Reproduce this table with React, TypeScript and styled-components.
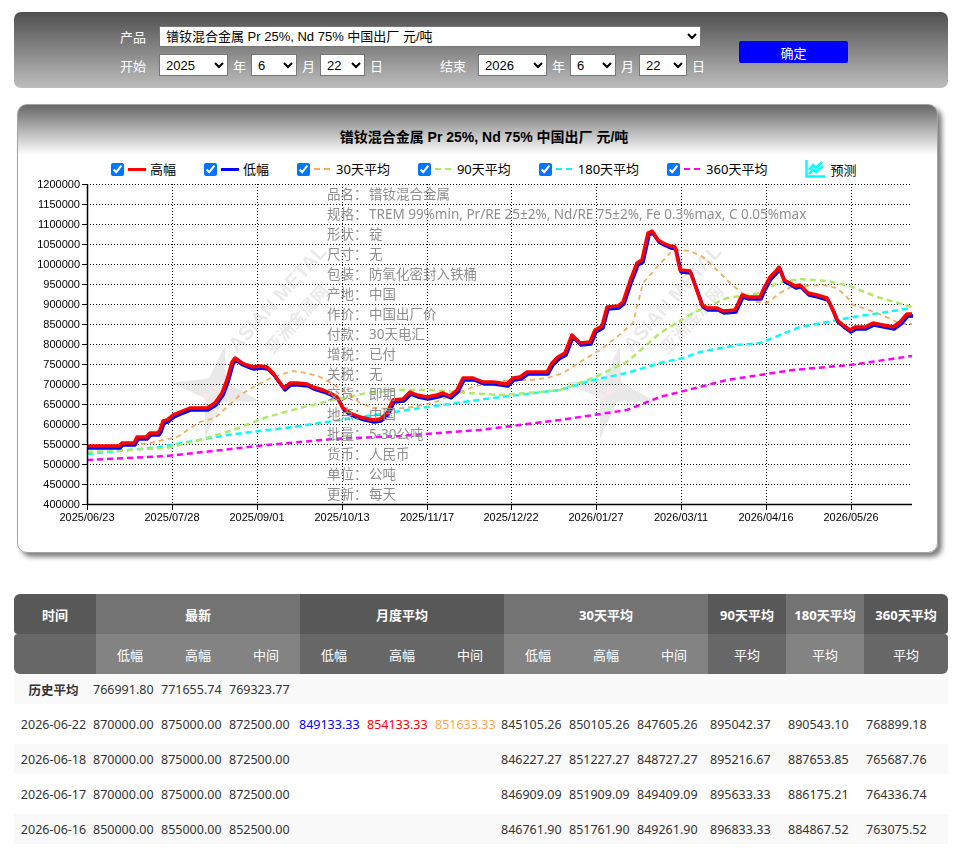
import styled, { createGlobalStyle } from "styled-components";

const GlobalStyle = createGlobalStyle`
  body {
    margin: 0;
    background: #fff;
    font-family: "Noto Sans", "Noto Sans CJK SC", sans-serif;
  }
`;

const Page = styled.div`
  width: 970px;
  padding: 12px 0 20px;
`;

/* ---------- filter bar ---------- */

const FilterBar = styled.div`
  box-sizing: border-box;
  width: 934px;
  height: 76px;
  margin-left: 14px;
  padding: 14px 0 0 106px;
  border-radius: 7px;
  background: linear-gradient(#4f4f4f, #bdbdbd);
  display: flex;
  align-items: flex-start;
`;

const Fields = styled.div`
  display: flex;
  flex-direction: column;
  gap: 7px;
`;

const FieldRow = styled.div`
  display: flex;
  align-items: center;
`;

const Label = styled.span<{ $width?: number; $gap?: number }>`
  width: ${(p) => p.$width ?? 39}px;
  margin-left: ${(p) => p.$gap ?? 0}px;
  color: #fff;
  font-size: 13px;
  font-family: "Liberation Sans", "Noto Sans CJK SC", sans-serif;
`;

const Unit = styled.span`
  margin: 0 5px;
  color: #fff;
  font-size: 13px;
  font-family: "Liberation Sans", "Noto Sans CJK SC", sans-serif;
`;

const Select = styled.select<{ $width: number; $height?: number }>`
  box-sizing: border-box;
  width: ${(p) => p.$width}px;
  height: ${(p) => p.$height ?? 22}px;
  padding: 0 0 0 2px;
  border: 1px solid #767676;
  background: #fff;
  color: #000;
  font-size: 13px;
  font-family: "Liberation Sans", "Noto Sans CJK SC", sans-serif;
`;

const ConfirmButton = styled.button`
  width: 109px;
  height: 22px;
  margin: 15px 0 0 29px;
  border: none;
  border-radius: 2px;
  background: #0000ff;
  color: #fff;
  font-size: 13px;
  font-family: "Noto Sans CJK SC", sans-serif;
  padding: 0;
`;

/* ---------- chart panel ---------- */

const Panel = styled.section`
  position: relative;
  box-sizing: border-box;
  width: 921px;
  height: 449px;
  margin: 16px 0 0 17px;
  border: 1px solid #a3a3a3;
  border-radius: 10px;
  background: linear-gradient(#686868 0, #ffffff 50px, #ffffff 100%);
  box-shadow: 4px 4px 5px rgba(0, 0, 0, 0.5);
`;

const ChartTitle = styled.div`
  padding: 23px 0 0 13px;
  height: 18px;
  line-height: 18px;
  text-align: center;
  font-size: 14px;
  font-weight: bold;
  color: #000;
  font-family: "Liberation Sans", "Noto Sans CJK SC", sans-serif;
`;

const Legend = styled.div`
  display: flex;
  align-items: center;
  gap: 28px;
  height: 18px;
  margin-top: 14px;
  padding-left: 93px;
  font-size: 13px;
  color: #000;
`;

const LegendItem = styled.label`
  display: flex;
  align-items: center;
  gap: 4px;
  line-height: 18px;
`;

const Check = styled.input`
  width: 13px;
  height: 13px;
  margin: 0;
`;

const Swatch = styled.span<{ $color: string; $dashed?: boolean }>`
  display: inline-block;
  width: ${(p) => (p.$dashed ? 16 : 18)}px;
  height: ${(p) => (p.$dashed ? 2.5 : 3)}px;
  margin-right: ${(p) => (p.$dashed ? 2 : 0)}px;
  background: ${(p) =>
    p.$dashed
      ? `repeating-linear-gradient(to right, ${p.$color} 0 6px, transparent 6px 10px)`
      : p.$color};
`;

const Forecast = styled.span`
  display: flex;
  align-items: center;
  gap: 5px;
  margin-left: 10px;
`;

const ChartArea = styled.div`
  position: relative;
`;

const Plot = styled.svg`
  display: block;
`;

const InfoBox = styled.div`
  position: absolute;
  left: 309px;
  top: 6px;
  display: grid;
  grid-template-columns: 42px auto;
  font-size: 13.5px;
  line-height: 20px;
  color: #8e8e8e;
  pointer-events: none;
`;

/* ---------- table ---------- */

const Table = styled.div`
  width: 934px;
  margin: 41px 0 0 14px;
`;

const HeadGrid = styled.div`
  display: grid;
  grid-template-columns: 82px repeat(9, 68px) 78px 78px 84px;
  grid-template-rows: 40px 40px;
`;

const HeadCell = styled.div<{ $span?: number; $light?: boolean; $sub?: boolean; $corner?: string }>`
  grid-column: span ${(p) => p.$span ?? 1};
  display: flex;
  align-items: center;
  justify-content: center;
  background: ${(p) =>
    p.$sub ? (p.$light ? "#838383" : "#676767") : p.$light ? "#737373" : "#585858"};
  border-radius: ${(p) => p.$corner ?? "0"};
  color: #fff;
  font-size: 13px;
  font-weight: ${(p) => (p.$sub ? "normal" : "bold")};
  font-family: "Noto Sans", "Noto Sans CJK SC", sans-serif;
`;

const BodyRow = styled.div<{ $striped: boolean }>`
  display: grid;
  grid-template-columns: 79px 68px 68px 70px 68px 68px 66px 68px 68px 73px 78px 78px 82px;
  height: ${(p) => (p.$striped ? 30 : 40)}px;
  align-items: center;
  background: ${(p) => (p.$striped ? "#f9f9f9" : "#fff")};
  color: #333;
  font-size: 12.5px;
`;

const DateCell = styled.div<{ $bold?: boolean }>`
  text-align: center;
  font-weight: ${(p) => (p.$bold ? "bold" : "normal")};
`;

const NumCell = styled.div<{ $color?: string }>`
  color: ${(p) => p.$color ?? "inherit"};
  white-space: nowrap;
`;

/* ---------- data ---------- */

const legend = [
  { label: "高幅", color: "#ff0000" },
  { label: "低幅", color: "#0000ff" },
  { label: "30天平均", color: "#f2ad63", dashed: true },
  { label: "90天平均", color: "#aeea68", dashed: true },
  { label: "180天平均", color: "#00ffff", dashed: true },
  { label: "360天平均", color: "#ff00ff", dashed: true },
];

const info = [
  ["品名：", "镨钕混合金属"],
  ["规格：", "TREM 99%min, Pr/RE 25±2%, Nd/RE 75±2%, Fe 0.3%max, C 0.05%max"],
  ["形状：", "锭"],
  ["尺寸：", "无"],
  ["包装：", "防氧化密封入铁桶"],
  ["产地：", "中国"],
  ["作价：", "中国出厂价"],
  ["付款：", "30天电汇"],
  ["增税：", "已付"],
  ["关税：", "无"],
  ["交货：", "即期"],
  ["地点：", "中国"],
  ["批量：", "5-30公吨"],
  ["货币：", "人民币"],
  ["单位：", "公吨"],
  ["更新：", "每天"],
];

const high = [
  [87, 446], [119, 446], [122, 443], [134, 443], [137, 437], [146, 437], [150, 433], [158, 433],
  [160, 430], [163, 421], [167, 420], [173, 415], [180, 412], [190, 408], [207, 408], [215, 403],
  [222, 393], [227, 380], [232, 362], [235, 358], [242, 363], [247, 365], [253, 367], [260, 366],
  [267, 367], [273, 373], [278, 380], [284, 388], [290, 383], [297, 383], [307, 384], [313, 387],
  [323, 390], [330, 393], [337, 397], [343, 408], [350, 413], [360, 417], [373, 420], [380, 419],
  [387, 413], [393, 400], [403, 399], [410, 392], [417, 395], [427, 397], [437, 395], [443, 393],
  [450, 396], [457, 390], [463, 378], [473, 378], [483, 382], [493, 382], [507, 384], [513, 378],
  [520, 377], [527, 372], [547, 372], [552, 363], [558, 357], [565, 353], [572, 335], [580, 343],
  [590, 342], [595, 330], [602, 326], [607, 307], [618, 306], [623, 302], [630, 281], [637, 263],
  [642, 260], [648, 233], [652, 231], [658, 240], [663, 243], [670, 246], [675, 247], [680, 270],
  [690, 271], [702, 305], [707, 308], [717, 308], [723, 311], [735, 310], [742, 295], [748, 297],
  [760, 297], [764, 288], [770, 277], [775, 272], [779, 267], [784, 280], [790, 283], [795, 286],
  [800, 285], [808, 293], [817, 295], [827, 298], [832, 308], [837, 320], [843, 325], [850, 330],
  [855, 327], [865, 327], [873, 323], [883, 325], [893, 327], [900, 322], [907, 314], [912, 314],
];

const avg30 = [
  [87, 446], [130, 445], [150, 443], [177, 437], [200, 422], [215, 418], [240, 395], [257, 385],
  [273, 377], [293, 371], [307, 373], [320, 377], [333, 384], [347, 393], [360, 403], [373, 408],
  [393, 409], [413, 407], [433, 403], [453, 395], [473, 387], [493, 382], [513, 380], [530, 380],
  [547, 378], [563, 373], [580, 362], [600, 350], [617, 337], [633, 323], [638, 303], [643, 283],
  [657, 267], [670, 253], [680, 250], [690, 251], [703, 257], [717, 270], [730, 283], [742, 293],
  [757, 302], [767, 303], [780, 293], [793, 286], [807, 286], [823, 285], [837, 288], [847, 297],
  [853, 305], [863, 308], [877, 313], [893, 320], [900, 324], [912, 324],
];

const avg90 = [
  [87, 452], [167, 448], [200, 440], [233, 430], [267, 417], [300, 408], [333, 400], [367, 393],
  [400, 390], [433, 390], [467, 393], [500, 395], [527, 393], [560, 390], [593, 378], [627, 362],
  [660, 333], [693, 313], [727, 298], [760, 293], [777, 283], [800, 279], [827, 281], [850, 286],
  [877, 297], [912, 307],
];

const avg180 = [
  [87, 454], [160, 447], [227, 435], [293, 427], [360, 417], [427, 407], [493, 398], [560, 390],
  [593, 380], [627, 373], [660, 363], [683, 358], [700, 352], [737, 345], [760, 343], [780, 335],
  [800, 327], [827, 322], [853, 317], [880, 313], [912, 308],
];

const avg360 = [
  [87, 460], [167, 456], [267, 445], [333, 439], [400, 436], [480, 430], [560, 420], [627, 410],
  [660, 397], [727, 380], [793, 370], [850, 365], [912, 356],
];

const xTicks = [
  [87, "2025/06/23"], [172, "2025/07/28"], [257, "2025/09/01"], [342, "2025/10/13"],
  [427, "2025/11/17"], [511, "2025/12/22"], [596, "2026/01/27"], [681, "2026/03/11"],
  [766, "2026/04/16"], [851, "2026/05/26"],
] as const;

const yTicks = Array.from({ length: 17 }, (_, i) => ({ y: 184 + i * 20, v: 1200000 - i * 50000 }));

const rows = [
  { date: "历史平均", bold: true, vals: ["766991.80", "771655.74", "769323.77", "", "", "", "", "", "", "", "", ""] },
  { date: "2026-06-22", vals: ["870000.00", "875000.00", "872500.00", "849133.33", "854133.33", "851633.33", "845105.26", "850105.26", "847605.26", "895042.37", "890543.10", "768899.18"] },
  { date: "2026-06-18", vals: ["870000.00", "875000.00", "872500.00", "", "", "", "846227.27", "851227.27", "848727.27", "895216.67", "887653.85", "765687.76"] },
  { date: "2026-06-17", vals: ["870000.00", "875000.00", "872500.00", "", "", "", "846909.09", "851909.09", "849409.09", "895633.33", "886175.21", "764336.74"] },
  { date: "2026-06-16", vals: ["850000.00", "855000.00", "852500.00", "", "", "", "846761.90", "851761.90", "849261.90", "896833.33", "884867.52", "763075.52"] },
];

const monthColors = ["#0000ff", "#ff0000", "#ffa64d"];

const pts = (list: number[][], dx = 0, dy = 0) => list.map(([x, y]) => `${x + dx},${y + dy}`).join(" ");

const ForecastIcon = () => (
  <svg width="20" height="18" viewBox="0 0 20 18">
    <path d="M1.5 0 V16.5 H20" fill="none" stroke="#00ffff" strokeWidth="2.5" />
    <path d="M4 10 L8 5 L11 8 L17 2" fill="none" stroke="#00ffff" strokeWidth="2.5" />
    <path d="M4 14 L8 9.5 L11 12 L18 6" fill="none" stroke="#00ffff" strokeWidth="2.5" />
  </svg>
);

const Watermark = ({ dx }: { dx: number }) => (
  <g transform={`translate(${dx},0)`} opacity="0.09">
    <polygon
      points="215,345 224,380 262,392 224,400 215,440 206,400 170,392 206,380"
      fill="#000"
      transform="rotate(12 215 392)"
    />
    <text x="203" y="398" fontSize="11" fontWeight="bold" fill="#ff0000" transform="rotate(-40 210 395)"
      fontFamily="Liberation Sans, sans-serif">AM</text>
    <text x="237" y="353" fontSize="20" fontWeight="bold" fill="#000" transform="rotate(-48 237 353)"
      fontFamily="Liberation Sans, sans-serif">ASIAN METAL</text>
    <text x="273" y="355" fontSize="17" fontWeight="bold" fill="#000" transform="rotate(-48 273 355)"
      fontFamily="Noto Sans CJK SC, sans-serif">亚洲金属网</text>
  </g>
);

const PriceChart = () => (
  <Plot width="919" height="350">
    <g transform="translate(-18,-178)">
      {yTicks.slice(0, 16).map((t) => (
        <line key={t.y} x1="87" x2="912" y1={t.y + 0.5} y2={t.y + 0.5} stroke="#000" strokeDasharray="1 2" />
      ))}
      {xTicks.slice(1).map(([x]) => (
        <line key={x} x1={x + 0.5} x2={x + 0.5} y1="184" y2="504" stroke="#000" strokeDasharray="1 2" />
      ))}
      <Watermark dx={0} />
      <Watermark dx={395} />
      <polyline points={pts(avg360)} fill="none" stroke="#ff00ff" strokeWidth="2.5" strokeDasharray="6 4" />
      <polyline points={pts(avg180)} fill="none" stroke="#00ffff" strokeWidth="2.5" strokeDasharray="6 4" />
      <polyline points={pts(avg90)} fill="none" stroke="#aeea68" strokeWidth="2.5" strokeDasharray="6 4" />
      <polyline points={pts(avg30)} fill="none" stroke="#f2ad63" strokeWidth="1.8" strokeDasharray="5 4" />
      <polyline points={pts(high, 1, 2)} fill="none" stroke="#0000ff" strokeWidth="3.5" strokeLinejoin="round" />
      <polyline points={pts(high)} fill="none" stroke="#ff0000" strokeWidth="3.5" strokeLinejoin="round" />
      <line x1="87.5" x2="87.5" y1="184" y2="505" stroke="#000" strokeWidth="1.5" />
      <line x1="87" x2="912" y1="504.5" y2="504.5" stroke="#000" strokeWidth="1.5" />
      {yTicks.map((t) => (
        <g key={t.v}>
          <line x1="82" x2="87" y1={t.y + 0.5} y2={t.y + 0.5} stroke="#000" />
          <text x="80" y={t.y + 4} textAnchor="end" fontSize="11" fill="#000" fontFamily="Liberation Sans, sans-serif">
            {t.v}
          </text>
        </g>
      ))}
      {xTicks.map(([x, label]) => (
        <g key={label}>
          <line x1={x + 0.5} x2={x + 0.5} y1="504" y2="510" stroke="#000" />
          <text x={x} y="521" textAnchor="middle" fontSize="11" fill="#000" fontFamily="Liberation Sans, sans-serif">
            {label}
          </text>
        </g>
      ))}
    </g>
  </Plot>
);

const App = () => {
  return (
    <Page>
      <GlobalStyle />
      <FilterBar>
        <Fields>
          <FieldRow>
            <Label>产品</Label>
            <Select $width={542} $height={21} defaultValue="p">
              <option value="p">镨钕混合金属 Pr 25%, Nd 75% 中国出厂 元/吨</option>
            </Select>
          </FieldRow>
          <FieldRow>
            <Label>开始</Label>
            <Select $width={69}><option>2025</option></Select>
            <Unit>年</Unit>
            <Select $width={46}><option>6</option></Select>
            <Unit>月</Unit>
            <Select $width={45}><option>22</option></Select>
            <Unit>日</Unit>
            <Label $width={38} $gap={52}>结束</Label>
            <Select $width={69}><option>2026</option></Select>
            <Unit>年</Unit>
            <Select $width={46}><option>6</option></Select>
            <Unit>月</Unit>
            <Select $width={48}><option>22</option></Select>
            <Unit>日</Unit>
          </FieldRow>
        </Fields>
        <ConfirmButton>确定</ConfirmButton>
      </FilterBar>

      <Panel>
        <ChartTitle>镨钕混合金属 Pr 25%, Nd 75% 中国出厂 元/吨</ChartTitle>
        <Legend>
          {legend.map((l) => (
            <LegendItem key={l.label}>
              <Check type="checkbox" defaultChecked />
              <Swatch $color={l.color} $dashed={l.dashed} />
              {l.label}
            </LegendItem>
          ))}
          <Forecast>
            <ForecastIcon />
            预测
          </Forecast>
        </Legend>
        <ChartArea>
          <PriceChart />
          <InfoBox>
            {info.map(([k, v]) => (
              <>
                <span key={k}>{k}</span>
                <span key={k + "v"}>{v}</span>
              </>
            ))}
          </InfoBox>
        </ChartArea>
      </Panel>

      <Table>
        <HeadGrid>
          <HeadCell $corner="6px 0 0 4px">时间</HeadCell>
          <HeadCell $span={3} $light>最新</HeadCell>
          <HeadCell $span={3}>月度平均</HeadCell>
          <HeadCell $span={3} $light>30天平均</HeadCell>
          <HeadCell>90天平均</HeadCell>
          <HeadCell $light>180天平均</HeadCell>
          <HeadCell $corner="0 6px 4px 0">360天平均</HeadCell>

          <HeadCell $sub $corner="4px 0 0 6px" />
          {["低幅", "高幅", "中间"].map((t) => <HeadCell key={"a" + t} $sub $light>{t}</HeadCell>)}
          {["低幅", "高幅", "中间"].map((t) => <HeadCell key={"b" + t} $sub>{t}</HeadCell>)}
          {["低幅", "高幅", "中间"].map((t) => <HeadCell key={"c" + t} $sub $light>{t}</HeadCell>)}
          <HeadCell $sub>平均</HeadCell>
          <HeadCell $sub $light>平均</HeadCell>
          <HeadCell $sub $corner="0 4px 6px 0">平均</HeadCell>
        </HeadGrid>
        {rows.map((r, i) => (
          <BodyRow key={r.date} $striped={i % 2 === 0}>
            <DateCell $bold={r.bold}>{r.date}</DateCell>
            {r.vals.map((v, j) => (
              <NumCell key={j} $color={i === 1 && j >= 3 && j <= 5 ? monthColors[j - 3] : undefined}>
                {v}
              </NumCell>
            ))}
          </BodyRow>
        ))}
      </Table>
    </Page>
  );
};

export default App;
